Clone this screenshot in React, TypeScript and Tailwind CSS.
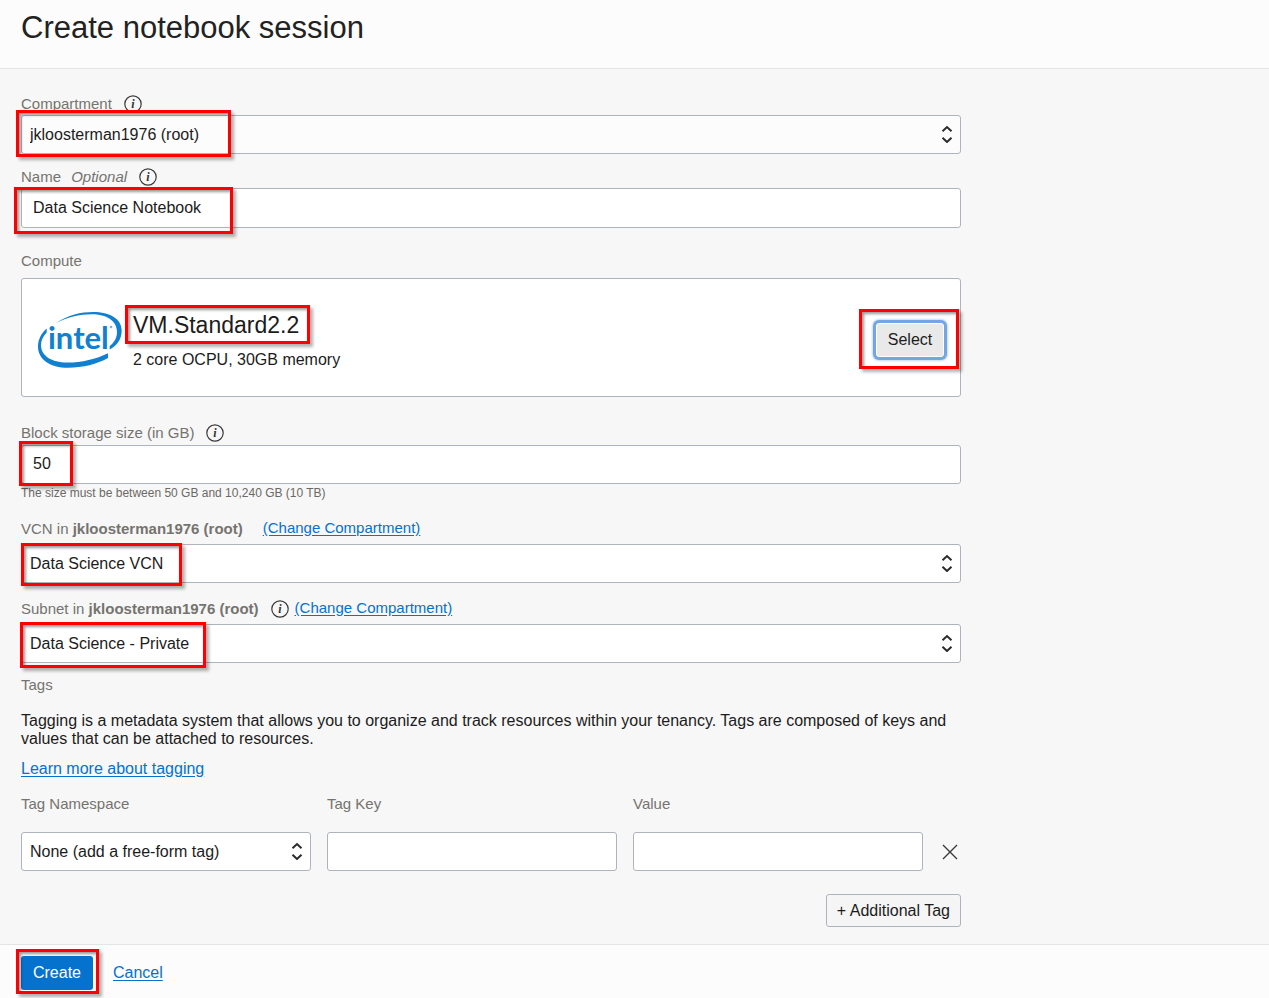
import type { ReactNode } from "react";
import clsx from "clsx";

const control =
  "block w-full rounded-[3px] border border-[#aeb4be] text-[16px] leading-[20px] text-[#1c1c1c] outline-none";
const linkStyle = "text-[#0572ce] underline underline-offset-2";

function Highlight({ className }: { className: string }) {
  return (
    <span
      aria-hidden="true"
      className={clsx(
        "pointer-events-none absolute z-10 border-[3px] border-[#ff0000] shadow-[3px_3px_3px_rgba(0,0,0,0.3),inset_2px_2px_3px_rgba(0,0,0,0.4)]",
        className,
      )}
    />
  );
}

function InfoButton({ about }: { about: string }) {
  return (
    <button type="button" aria-label={`About ${about}`} className="block h-[18px] w-[18px] shrink-0">
      <svg viewBox="0 0 18 18" className="block h-[18px] w-[18px]" aria-hidden="true">
        <circle cx="9" cy="9" r="8.2" fill="none" stroke="#3a3a3a" strokeWidth="1.2" />
        <text
          x="9"
          y="13"
          textAnchor="middle"
          fill="#333"
          className="font-['Liberation_Serif',serif] text-[12px] font-bold italic"
        >
          i
        </text>
      </svg>
    </button>
  );
}

function SelectBox({
  id,
  value,
  className = "bg-white",
  children,
}: {
  id: string;
  value: string;
  className?: string;
  children?: ReactNode;
}) {
  return (
    <div className="relative">
      <select id={id} defaultValue={value} className={clsx(control, "h-[39px] appearance-none pr-8 pl-2", className)}>
        <option>{value}</option>
      </select>
      <svg
        viewBox="0 0 12 18"
        className="pointer-events-none absolute top-[10px] right-[8px] h-[18px] w-[12px]"
        fill="none"
        stroke="#2b2b2b"
        strokeWidth="2"
        aria-hidden="true"
      >
        <path d="M1.500 6.200 6 2l4.500 4.200M1.500 12.800l4.500 4.200 4.500-4.200" />
      </svg>
      {children}
    </div>
  );
}

function LabelRow({ className, children }: { className?: string; children: ReactNode }) {
  return (
    <div className={clsx("flex h-[20px] items-center text-[15px] leading-[20px] text-[#75736f]", className)}>
      {children}
    </div>
  );
}

function IntelLogo() {
  return (
    <svg viewBox="0 0 84 56" className="h-[56px] w-[84px] shrink-0" fill="#1180d0" role="img" aria-label="Intel">
      <path d="M18 11C30 3 43 0 55 0c17 0 28.700 7 28.700 18.500 0 9-5 15.500-12 19v-3.500c4.500-3.500 7.300-8 7.300-14C79 8.500 68 2.300 54 2.300 41 2.300 29 5.500 18 11Z" />
      <path d="M8.700 16.500v4C5 24.500 3 28.500 3 33c0 11 11 17.500 26 17.500 15 0 29-3.500 41-9.300v4.800c-11 6-25 9.800-40 9.800C12 55.800 0 47.500 0 34.500 0 27.500 3.500 21 8.700 16.500Z" />
      <text x="10" y="37" className="font-[Lato,sans-serif] text-[31px] font-bold">
        intel
      </text>
      <circle cx="73" cy="15" r="1.300" opacity="0.6" />
    </svg>
  );
}

export default function App() {
  return (
    <form
      onSubmit={(e) => e.preventDefault()}
      className="flex min-h-screen flex-col bg-[#fcfcfc] font-['Liberation_Sans',Arial,sans-serif] text-[16px] leading-[18px] text-[#1c1c1c]"
    >
      <header className="border-b border-[#e4e4e4] px-[21px] pt-2 pb-5">
        <h1 className="text-[31px] leading-[40px] text-[#222]">Create notebook session</h1>
      </header>

      <main className="bg-[#f7f7f7] px-[21px] pt-[25px] pb-[17px]">
        <div className="max-w-[940px]">
          <LabelRow className="mb-px gap-3">
            <label htmlFor="compartment">Compartment</label>
            <InfoButton about="compartment" />
          </LabelRow>
          <SelectBox id="compartment" value="jkloosterman1976 (root)" className="bg-[#fcfcfc]">
            <Highlight className="-top-[5px] -left-[5px] h-[47px] w-[215px]" />
          </SelectBox>

          <LabelRow className="mt-[13px] mb-px gap-3">
            <label htmlFor="name">
              Name <em className="ml-[6px]">Optional</em>
            </label>
            <InfoButton about="name" />
          </LabelRow>
          <div className="relative">
            <input
              id="name"
              type="text"
              defaultValue="Data Science Notebook"
              className={clsx(control, "h-[40px] bg-white px-[11px]")}
            />
            <Highlight className="-top-px -left-[7px] h-[47px] w-[219px]" />
          </div>

          <LabelRow className="mt-[23px] mb-[7px]">
            <h2>Compute</h2>
          </LabelRow>
          <section className="flex h-[119px] items-center rounded-[3px] border border-[#aeb4be] bg-white px-4 pt-[5px]">
            <IntelLogo />
            <div className="ml-[11px]">
              <div className="relative w-fit">
                <h3 className="text-[23px] leading-[26px]">VM.Standard2.2</h3>
                <Highlight className="-top-[7px] -left-[8px] h-[39px] w-[185px]" />
              </div>
              <p className="mt-[13px]">2 core OCPU, 30GB memory</p>
            </div>
            <div className="relative ml-auto">
              <button
                type="button"
                className="block h-[34px] w-[68px] rounded-[3px] border border-white bg-[#e9e9e9] shadow-[0_0_0_3px_#74a7e2,0_0_2px_4px_#c5daf2]"
              >
                Select
              </button>
              <Highlight className="-top-[14px] -left-[17px] h-[60px] w-[100px]" />
            </div>
          </section>

          <LabelRow className="mt-[26px] mb-[2px] gap-3">
            <label htmlFor="storage">Block storage size (in GB)</label>
            <InfoButton about="block storage size" />
          </LabelRow>
          <div className="relative">
            <input
              id="storage"
              type="text"
              inputMode="numeric"
              defaultValue="50"
              aria-describedby="storage-help"
              className={clsx(control, "h-[39px] bg-white px-[11px] pb-[2px]")}
            />
            <Highlight className="-top-[4px] -left-[2px] h-[45px] w-[54px]" />
          </div>
          <p id="storage-help" className="text-[12px] text-[#6b6966]">
            The size must be between 50 GB and 10,240 GB (10 TB)
          </p>

          <LabelRow className="mt-[17px] mb-[5px] gap-5">
            <label htmlFor="vcn">
              VCN in <strong>jkloosterman1976 (root)</strong>
            </label>
            <a href="#vcn" className={clsx(linkStyle, "pb-[3px]")}>
              (Change Compartment)
            </a>
          </LabelRow>
          <SelectBox id="vcn" value="Data Science VCN">
            <Highlight className="-top-px left-0 h-[43px] w-[161px]" />
          </SelectBox>

          <LabelRow className="mt-4 mb-[5px] gap-3">
            <label htmlFor="subnet">
              Subnet in <strong>jkloosterman1976 (root)</strong>
            </label>
            <div className="flex items-center gap-[6px]">
              <InfoButton about="subnet" />
              <a href="#subnet" className={clsx(linkStyle, "pb-[3px]")}>
                (Change Compartment)
              </a>
            </div>
          </LabelRow>
          <SelectBox id="subnet" value="Data Science - Private">
            <Highlight className="-top-[2px] -left-px h-[46px] w-[186px]" />
          </SelectBox>

          <LabelRow className="mt-3">
            <h2>Tags</h2>
          </LabelRow>
          <p className="mt-[17px]">
            Tagging is a metadata system that allows you to organize and track resources within your tenancy. Tags are
            composed of keys and values that can be attached to resources.
          </p>
          <p className="mt-3">
            <a href="#tagging" className={linkStyle}>
              Learn more about tagging
            </a>
          </p>

          <div className="mt-4 flex items-end gap-4">
            <div className="min-w-0 flex-1">
              <LabelRow className="mb-[18px]">
                <label htmlFor="tag-namespace">Tag Namespace</label>
              </LabelRow>
              <SelectBox id="tag-namespace" value="None (add a free-form tag)" />
            </div>
            <div className="min-w-0 flex-1">
              <LabelRow className="mb-[18px]">
                <label htmlFor="tag-key">Tag Key</label>
              </LabelRow>
              <input id="tag-key" type="text" className={clsx(control, "h-[39px] bg-white px-[11px]")} />
            </div>
            <div className="min-w-0 flex-1">
              <LabelRow className="mb-[18px]">
                <label htmlFor="tag-value">Value</label>
              </LabelRow>
              <input id="tag-value" type="text" className={clsx(control, "h-[39px] bg-white px-[11px]")} />
            </div>
            <button type="button" aria-label="Remove tag" className="flex h-[39px] w-[22px] items-center justify-center">
              <svg viewBox="0 0 16 16" className="h-[16px] w-[16px]" stroke="#3a3a3a" strokeWidth="1.4" aria-hidden="true">
                <path d="m1 1 14 14M15 1 1 15" />
              </svg>
            </button>
          </div>

          <div className="mt-[23px] flex justify-end">
            <button type="button" className="h-[33px] rounded-[3px] border border-[#aeb4be] bg-[#f5f5f5] px-[10px]">
              + Additional Tag
            </button>
          </div>
        </div>
      </main>

      <footer className="flex items-center gap-5 border-t border-[#e4e4e4] px-[21px] pt-[11px] pb-2">
        <div className="relative">
          <button type="submit" className="block h-[34px] w-[72px] rounded-[3px] bg-[#0572ce] text-white">
            Create
          </button>
          <Highlight className="-top-[7px] -left-[5px] h-[45px] w-[83px]" />
        </div>
        <a href="#cancel" className={linkStyle}>
          Cancel
        </a>
      </footer>
    </form>
  );
}
